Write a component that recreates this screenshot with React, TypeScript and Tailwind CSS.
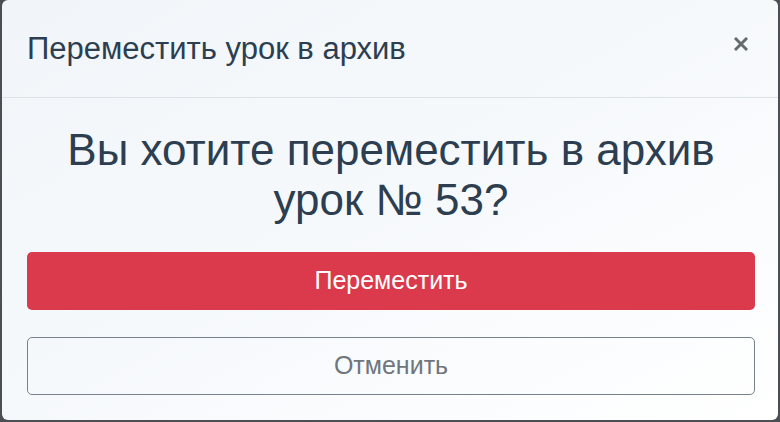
function CloseIcon() {
  return (
    <svg width="14" height="14" viewBox="0 0 14 14" fill="none">
      <path d="M2 2 L12 12 M12 2 L2 12" stroke="#666b70" strokeWidth="3" strokeLinecap="square" />
    </svg>
  );
}

export default function App() {
  return (
    <div className="w-[780px] h-[422px] bg-[#4b4f54] overflow-hidden font-['Liberation_Sans',Arial,sans-serif]">
      <div className="ml-[2px] w-[776px] h-[420px] rounded-md bg-gradient-to-br from-[#f1f5f9] via-[#f6f9fc] to-white flex flex-col">
        <div className="h-[98px] shrink-0 flex items-center justify-between pl-[25px] pr-[27px] border-b border-[#dde2e7]">
          <h5 className="text-[31px] leading-none text-[#2c3e50]">Переместить урок в архив</h5>
          <button className="w-[20px] h-[20px] flex items-center justify-center -mt-[10px]">
            <CloseIcon />
          </button>
        </div>
        <div className="pl-[25px] pr-[23px] pt-[27px] flex flex-col">
          <h2 className="text-center text-[44px] leading-[50px] text-[#2c3e50]">
            Вы хотите переместить в архив
            <br />
            урок № 53?
          </h2>
          <button className="mt-[27px] h-[58px] w-full rounded-[5px] bg-[#da3a4b] text-white text-[25px]">
            Переместить
          </button>
          <button className="mt-[27px] h-[58px] w-full rounded-[5px] border-[1.5px] border-[#78828c] bg-transparent text-[#6f767d] text-[25px]">
            Отменить
          </button>
        </div>
      </div>
    </div>
  );
}
